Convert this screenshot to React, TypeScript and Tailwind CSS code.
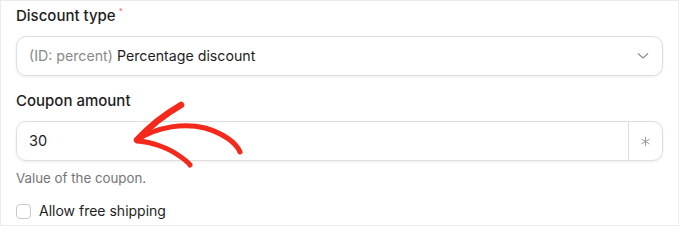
import React from "react";

export default function App() {
  return (
    <div className="relative w-[680px] h-[228px] bg-white overflow-hidden" style={{ fontFamily: "Inter, 'Noto Sans', sans-serif" }}>
      <div className="w-[679px] h-[226px] border border-[#ebebeb] px-[15px] pt-[5px]">
        <div className="h-[20px] leading-[20px] text-[15px] font-medium text-[#1e1e1e] flex">
          <span>Discount type</span>
          <span className="text-[8px] leading-[8px] text-[#f06a7a] ml-[3px] mt-[1px]">*</span>
        </div>
        <div className="mt-[10px] h-[40px] rounded-[10px] border border-[#dedede] shadow-[0_1px_3px_rgba(0,0,0,0.08)] flex items-center justify-between pl-[12px] pr-[12px]">
          <div className="text-[14.2px] leading-[20px]">
            <span className="text-[#8a8a8a]">(ID: percent) </span>
            <span className="text-[#1e1e1e]">Percentage discount</span>
          </div>
          <svg width="12" height="8" viewBox="0 0 12 8" className="mr-[1px]">
            <path d="M1 1.5 L6 6 L11 1.5" fill="none" stroke="#8c8c8c" strokeWidth="1.2" />
          </svg>
        </div>
        <div className="mt-[15px] h-[20px] leading-[20px] text-[15px] font-medium text-[#1e1e1e]">Coupon amount</div>
        <div className="mt-[10px] h-[40px] rounded-[10px] border border-[#dedede] shadow-[0_1px_3px_rgba(0,0,0,0.08)] flex">
          <div className="flex-1 flex items-center pl-[12px] text-[14.5px] text-[#1e1e1e]">30</div>
          <div className="w-[34px] border-l border-[#dedede] flex items-center justify-center">
            <svg width="13" height="13" viewBox="0 0 24 24" fill="none" stroke="#8c8c8c" strokeWidth="1.6" strokeLinecap="round">
              <path d="M12 4v16" />
              <path d="M5.1 8 18.9 16" />
              <path d="M18.9 8 5.1 16" />
            </svg>
          </div>
        </div>
        <div className="mt-[7px] h-[20px] leading-[20px] text-[13.3px] text-[#757575]">Value of the coupon.</div>
        <div className="mt-[13px] h-[20px] flex items-center gap-[8px]">
          <div className="w-[15px] h-[15px] rounded-[4px] border border-[#c8c8c8] bg-white" />
          <span className="text-[14px] leading-[20px] text-[#1e1e1e]">Allow free shipping</span>
        </div>
      </div>
      <svg className="absolute left-0 top-0 pointer-events-none" width="680" height="228" viewBox="0 0 680 228">
        <g fill="none" stroke="#f5291b" strokeLinecap="round" strokeLinejoin="round">
          <path d="M137 140 C148 128 162 116 181 105" strokeWidth="6.5" />
          <path d="M137 140 C158 126 185 123 205 128 C222 133 236 142 240 152" strokeWidth="5" />
          <path d="M138 141 C152 142 168 148 178 155 C184 159 188 162 190 165" strokeWidth="5" />
        </g>
      </svg>
    </div>
  );
}
